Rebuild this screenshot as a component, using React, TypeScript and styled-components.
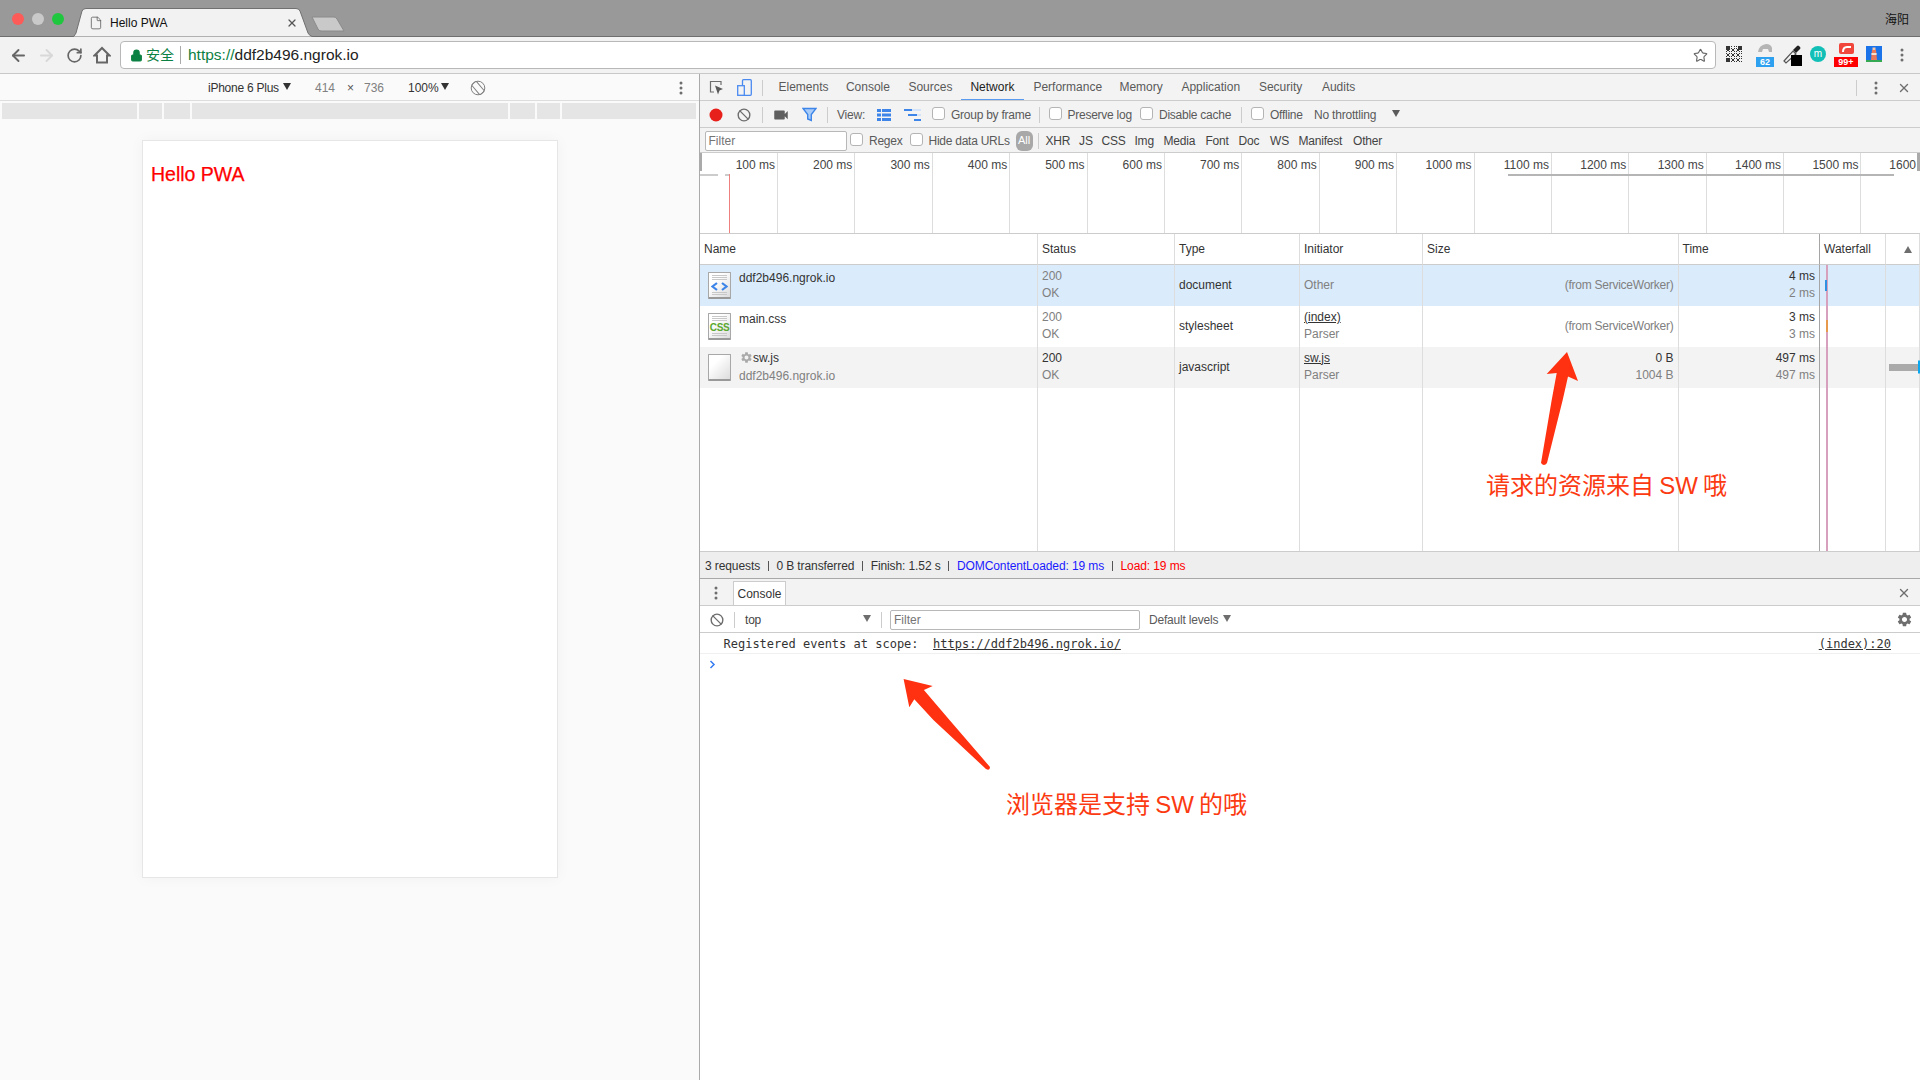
import React from "react";
import styled, { createGlobalStyle } from "styled-components";
import { ArrowLeft, ArrowRight, RotateCw, Star, X, Ban, Lock, File } from "lucide-react";
import { MdSettings, MdVideocam } from "react-icons/md";

const Global = createGlobalStyle`
  html, body { margin: 0; padding: 0; width: 1920px; height: 1080px; overflow: hidden; background: #fff; }
  * { box-sizing: border-box; }
  #root { width: 1920px; height: 1080px; }
`;

const SANS = `"Liberation Sans", "Noto Sans CJK SC", sans-serif`;
const MONO = `"DejaVu Sans Mono", monospace`;

const Page = styled.div`
  position: relative; width: 1920px; height: 1080px; display: flex; flex-direction: column;
  font: 12px/14px ${SANS}; color: #333; overflow: hidden;
`;
const TabStrip = styled.div`
  height: 37px; flex: none; background: #999; border-bottom: 1px solid #6e6e6e;
  display: flex; align-items: flex-start; padding-left: 12px;
`;
const Lights = styled.div`display: flex; gap: 8px; margin-top: 13px; width: 61px;`;
const Light = styled.span<{ $c: string }>`width: 12px; height: 12px; border-radius: 50%; background: ${p => p.$c};`;
const BrowserTab = styled.div`
  position: relative; width: 241px; height: 29px; margin-top: 8px; display: flex; align-items: center;
  padding: 1px 16px 0 16px; gap: 8px; font-size: 12px; color: #111;
`;
const TabShape = styled.svg`position: absolute; left: 0; top: 0; width: 241px; height: 29px;`;
const TabContent = styled.span`position: relative; display: flex; align-items: center;`;
const TabTitle = styled(TabContent)`flex: 1; margin-left: -1px;`;
const NewTab = styled.svg`margin: 16px 0 0 -3px; flex: none;`;
const UserName = styled.div`margin-left: auto; margin-top: 13px; padding-right: 11px; font-size: 12px; color: #111;`;

const NavBar = styled.div`
  height: 37px; flex: none; background: #f2f2f2; border-bottom: 1px solid #c8c8c8;
  display: flex; align-items: center; padding-left: 4px;
`;
const NavSlot = styled.div<{ $c: string }>`width: 28px; display: flex; justify-content: center; color: ${p => p.$c};`;
const Address = styled.div`
  width: 1596px; height: 28px; margin-left: 4px; background: #fff; border: 1px solid #b8b8b8; border-radius: 4px;
  display: flex; align-items: center; padding: 0 7px 0 9px; font-size: 14px;
`;
const Secure = styled.span`color: #0b8043; margin-left: 3px; padding-right: 6px; border-right: 1px solid #aaa; line-height: 18px;`;
const Scheme = styled.span`color: #0b8043; margin-left: 7px; font-size: 15.5px;`;
const Host = styled.span`color: #222; font-size: 15.5px;`;
const StarSlot = styled.span`margin-left: auto; display: flex; color: #666;`;
const Ext = styled.div<{ $w: number }>`
  position: relative; width: ${p => p.$w}px; height: 24px; flex: none; display: flex; justify-content: center; align-items: center;
`;
const Badge = styled.span<{ $bg: string; $w: number }>`
  position: absolute; left: 50%; margin-left: ${p => -p.$w / 2}px; top: 14px; width: ${p => p.$w}px; height: 10px;
  background: ${p => p.$bg}; color: #fff; font: bold 9px/10px ${SANS}; text-align: center;
`;
const MCircle = styled.span`
  width: 16px; height: 16px; margin-top: -3px; border-radius: 50%; background: #12bfb7; color: #fff; font: 10px/15px ${SANS}; text-align: center;
`;

const Main = styled.div`flex: 1; display: flex; min-height: 0;`;
const Emulator = styled.div`width: 700px; flex: none; background: #fafafa; border-right: 1px solid #aaa; display: flex; flex-direction: column;`;
const DeviceBar = styled.div`height: 27px; flex: none; border-bottom: 1px solid #ddd; display: flex; align-items: center; padding: 1px 0 0 208px; color: #333;`;
const DeviceText = styled.span<{ $ml?: number; $c?: string; $w?: number; $tight?: boolean }>`
  margin-left: ${p => p.$ml ?? 0}px; color: ${p => p.$c ?? "#333"}; ${p => (p.$w ? `width: ${p.$w}px;` : "")} flex: none;
  letter-spacing: ${p => (p.$tight ? "-.25px" : "0")};
`;
const Caret = styled.span<{ $ml?: number; $c?: string }>`
  width: 0; height: 0; flex: none; margin-left: ${p => p.$ml ?? 0}px; margin-top: -2px;
  border-left: 4px solid transparent; border-right: 4px solid transparent; border-top: 7px solid ${p => p.$c ?? "#333"};
`;
const Ruler = styled.div`display: flex; gap: 2px; height: 16px; flex: none; margin: 2px 3px 0 2px;`;
const RulerSeg = styled.div<{ $w: number }>`width: ${p => p.$w}px; background: #e5e5e5;`;
const DeviceCard = styled.div`
  width: 416px; height: 738px; flex: none; margin: 21px 0 0 142px; background: #fff; border: 1px solid #e6e6e6;
  box-shadow: 0 0 14px rgba(0,0,0,.04); padding: 21px 0 0 8px;
`;
const Hello = styled.h1`margin: 0; font: 19.5px/24px ${SANS}; color: #f00; -webkit-text-stroke: .25px #f00;`;

const Dev = styled.div`flex: 1; min-width: 0; display: flex; flex-direction: column; background: #fff;`;
const ToolRow = styled.div<{ $h: number; $pl?: number; $bg?: string }>`
  height: ${p => p.$h}px; flex: none; background: ${p => p.$bg ?? "#f3f3f3"}; border-bottom: 1px solid #ccc;
  display: flex; align-items: center; padding: 1px 0 0 ${p => p.$pl ?? 0}px; white-space: nowrap; overflow: hidden;
`;
const IconSlot = styled.div<{ $w: number; $c?: string }>`
  width: ${p => p.$w}px; flex: none; display: flex; justify-content: center; align-items: center; color: ${p => p.$c ?? "#6e6e6e"};
`;
const Sep = styled.div<{ $ml?: number }>`width: 1px; height: 16px; flex: none; background: #ccc; margin-left: ${p => p.$ml ?? 0}px;`;
const DevTab = styled.div<{ $w: number; $on?: boolean }>`
  position: relative; width: ${p => p.$w}px; height: 26px; flex: none; padding-left: 9.5px; line-height: 24px; color: ${p => (p.$on ? "#222" : "#5a5a5a")};
  border-bottom: 2px solid ${p => (p.$on ? "#5a9bf0" : "transparent")};
`;
const RightTools = styled.div`margin-left: auto; display: flex; align-items: center;`;
const Label = styled.span<{ $ml?: number; $w?: number; $c?: string }>`
  flex: none; margin-left: ${p => p.$ml ?? 0}px; ${p => (p.$w ? `width: ${p.$w}px;` : "")} color: ${p => p.$c ?? "#5a5a5a"}; letter-spacing: -.2px;
`;
const CheckLabel = styled.label<{ $ml?: number; $w: number }>`
  flex: none; display: flex; align-items: center; gap: 6px; margin-left: ${p => p.$ml ?? 0}px; width: ${p => p.$w}px; color: #5a5a5a; letter-spacing: -.25px;
`;
const Box = styled.span`width: 13px; height: 13px; margin-top: -3px; flex: none; background: #fff; border: 1px solid #b4b4b4; border-radius: 3px;`;
const FilterBox = styled.div<{ $w: number; $h: number; $ml?: number }>`
  flex: none; width: ${p => p.$w}px; height: ${p => p.$h}px; margin-left: ${p => p.$ml ?? 0}px; background: #fff; border: 1px solid #b8b8b8; border-radius: 2px;
  color: #757575; padding-left: 3px; line-height: ${p => p.$h - 2}px;
`;
const AllPill = styled.span`
  width: 17px; height: 20px; flex: none; margin-left: 0; background: #a8a8a8; border-radius: 6px; color: #fff; text-align: center; line-height: 19px; font-size: 11px;
`;
const Chip = styled.span<{ $w: number }>`flex: none; width: ${p => p.$w}px; color: #444; letter-spacing: -.2px;`;

const Overview = styled.div`
  position: relative; height: 81px; flex: none; border-bottom: 1px solid #ccc; display: flex; overflow: hidden; padding-left: .6px;
`;
const Tick = styled.div`
  width: 77.4px; flex: none; height: 100%; border-right: 1px solid #ddd; text-align: right; padding: 5px 2px 0 0; color: #444; white-space: nowrap;
`;
const LastTick = styled.div`flex: 1; height: 100%; text-align: right; padding: 5px 4px 0 0; color: #444;`;
const OverviewChart = styled.svg`position: absolute; left: 0; top: 0;`;

const Table = styled.div`
  position: relative; height: 317px; flex: none; display: grid;
  grid-template-columns: 338px 137px 125px 123px 255.5px 141.5px 66px 34px;
  grid-template-rows: 31px 41px 41px 41px 1fr;
`;
const HeadCell = styled.div<{ $dark?: boolean }>`
  border-bottom: 1px solid #ccc; border-right: 1px solid ${p => (p.$dark ? "#a5a5a5" : "#ddd")}; padding-left: 4px; line-height: 29px; color: #333;
  display: flex; align-items: center;
`;
const Cell = styled.div<{ $bg?: string; $right?: boolean; $dark?: boolean }>`
  background: ${p => p.$bg ?? "transparent"}; border-right: 1px solid ${p => (p.$dark ? "#a5a5a5" : "#ddd")};
  padding: 2px 4px 0 4px; display: flex; flex-direction: column; line-height: 18px; white-space: nowrap;
  text-align: ${p => (p.$right ? "right" : "left")}; justify-content: flex-start;
`;
const Mid = styled.div<{ $c?: string }>`line-height: 36px; color: ${p => p.$c ?? "#333"};`;
const SizeNote = styled(Mid)`letter-spacing: -.25px;`;
const Line = styled.div<{ $c?: string; $u?: boolean }>`
  color: ${p => p.$c ?? "#333"}; text-decoration: ${p => (p.$u ? "underline" : "none")}; height: 17.6px; display: flex; align-items: center;
  justify-content: inherit;
`;
const RightLine = styled(Line)`justify-content: flex-end;`;
const NameCell = styled.div<{ $bg?: string }>`
  background: ${p => p.$bg ?? "transparent"}; border-right: 1px solid #ddd; padding: 7px 0 0 8px; display: flex; gap: 8px;
`;
const NameText = styled.div`margin-top: -3.5px; line-height: 18px;`;
const NameMain = styled.div`height: 17px; margin-top: -2px; margin-bottom: 1px;`;
const NameSub = styled.div`color: #808080;`;
const Cog = styled(MdSettings)`vertical-align: -2px; margin-left: 1px;`;
const FileIcon = styled.div`
  position: relative; width: 23px; height: 27px; flex: none; border: 1px solid #a8a8a8; border-bottom: 2px solid #999; border-radius: 1px;
  background: linear-gradient(135deg, #fff 30%, #dcdcdc); display: flex; flex-direction: column; align-items: center; justify-content: center; gap: 1px;
`;
const CssMark = styled.span`font: bold 10px/9px ${SANS}; color: #5aa82e; letter-spacing: -.4px;`;
const DocLines = styled.span<{ $n: number }>`
  width: 15px; height: ${p => p.$n * 2}px; flex: none;
  background: repeating-linear-gradient(#c8c8c8 0 1px, transparent 1px 2px);
`;
const WaterfallChart = styled.svg`position: absolute; right: 0; top: 31px; pointer-events: none;`;
const SortUp = styled.span`width: 0; height: 0; margin-left: 14px; border-left: 4px solid transparent; border-right: 4px solid transparent; border-bottom: 7px solid #6e6e6e;`;

const Status = styled.div`
  height: 28px; flex: none; background: #eee; border-top: 1px solid #ccc; border-bottom: 1px solid #a8a8a8;
  display: flex; align-items: center; padding: 1px 0 0 5px; gap: 7.7px; color: #333; letter-spacing: -.1px;
`;
const StatusBar = styled.span`width: 1px; height: 10px; background: #555;`;
const StatusText = styled.span<{ $c?: string }>`color: ${p => p.$c ?? "#333"};`;
const DrawerTab = styled.div`
  width: 53px; height: 24px; margin: 1px 0 0 7px; background: #fff; border: 1px solid #ccc; border-bottom: none; text-align: center; line-height: 24px; color: #333; flex: none; align-self: flex-start;
`;
const Message = styled.div`
  height: 21px; flex: none; border-bottom: 1px solid #f0f0f0; display: flex; align-items: center; padding: 2px 29px 0 23.5px; font: 12px/16px ${MONO}; color: #333; white-space: pre;
`;
const MonoLink = styled.span<{ $right?: boolean }>`text-decoration: underline; ${p => (p.$right ? "margin-left: auto;" : "")}`;
const Prompt = styled.div`padding: 6px 0 0 9px; display: flex;`;

const Annotations = styled.svg`position: absolute; left: 0; top: 0; pointer-events: none;`;
const Note = styled.div<{ $x: number; $y: number; $ws: number }>`
  position: absolute; left: ${p => p.$x}px; top: ${p => p.$y}px; font: 24px/30px ${SANS}; color: #fb3a12; white-space: nowrap; word-spacing: ${p => p.$ws}px;
`;

const Dots = ({ c = "#6e6e6e" }: { c?: string }) => (
  <svg width="4" height="14" viewBox="0 0 4 14"><circle cx="2" cy="2" r="1.5" fill={c} /><circle cx="2" cy="7" r="1.5" fill={c} /><circle cx="2" cy="12" r="1.5" fill={c} /></svg>
);

const QR = () => {
  const cells: React.ReactNode[] = [];
  for (let y = 0; y < 16; y++) for (let x = 0; x < 16; x++) {
    const finder = (x < 4 && y < 4) || (x > 11 && y < 4) || (x < 4 && y > 11);
    const on = finder || ((x * 7 + y * 13 + x * y * 3) % 5) < 2;
    if (on) cells.push(<rect key={x + "-" + y} x={x} y={y} width="1" height="1" fill="#333" />);
  }
  return <svg width="16" height="16" viewBox="0 0 16 16" style={{ marginTop: -2 }}>{cells}</svg>;
};

const ticks = Array.from({ length: 15 }, (_, i) => `${(i + 1) * 100} ms`);

export default function App() {
  return (
    <Page>
      <Global />
      <TabStrip>
        <Lights>
          <Light $c="#fc5b57" /><Light $c="#c9c9c9" /><Light $c="#1fc73e" />
        </Lights>
        <BrowserTab>
          <TabShape viewBox="0 0 241 29">
            <path d="M0 29 L1 28 Q2 27 3 25 L9 3 Q10 0.5 13 0.5 L223 0.5 Q226 0.5 227 3 L235 25 Q236 27 238 28 L241 29 Z" fill="#f2f2f2" stroke="#707070" strokeWidth="1" />
          </TabShape>
          <TabContent><File size={14} color="#555" strokeWidth={1.3} /></TabContent>
          <TabTitle>Hello PWA</TabTitle>
          <TabContent><X size={12} color="#555" strokeWidth={2.5} /></TabContent>
        </BrowserTab>
        <NewTab width="34" height="17" viewBox="0 0 34 17">
          <path d="M1 1 L23 1 Q25 1 26 3 L33 15 L10 15 Q8 15 7 13 Z" fill="#c9c9c9" stroke="#8a8a8a" strokeWidth="1" />
        </NewTab>
        <UserName>海阳</UserName>
      </TabStrip>
      <NavBar>
        <NavSlot $c="#666"><ArrowLeft size={19} strokeWidth={2.4} /></NavSlot>
        <NavSlot $c="#d8d8d8"><ArrowRight size={19} strokeWidth={2.4} /></NavSlot>
        <NavSlot $c="#666"><RotateCw size={17} strokeWidth={2.4} /></NavSlot>
        <NavSlot $c="#666">
          <svg width="18" height="18" viewBox="0 0 18 18" fill="none" stroke="#666" strokeWidth="2"><path d="M1.5 9.5 L9 2 L16.5 9.5 H14 V16.5 H4 V9.5 Z" /></svg>
        </NavSlot>
        <Address>
          <Lock size={13} color="#0b8043" fill="#0b8043" strokeWidth={2} />
          <Secure>安全</Secure>
          <Scheme>https://</Scheme>
          <Host>ddf2b496.ngrok.io</Host>
          <StarSlot><Star size={15} strokeWidth={1.8} /></StarSlot>
        </Address>
        <Ext $w={36}><QR /></Ext>
        <Ext $w={26}>
          <svg width="18" height="10" viewBox="0 0 18 10" style={{ marginTop: -14 }}><path d="M2 9 Q3 2 10 1 Q15 1 16 5 L16 9 L13 9 L12 6 L7 6 L6 9 Z" fill="#b5b5b5" /></svg>
          <Badge $bg="#2ea0f0" $w={18}>62</Badge>
        </Ext>
        <Ext $w={30}>
          <svg width="20" height="21" viewBox="0 0 20 21">
            <path d="M1 16 L10 6 L13 9 L3 18 Z" fill="none" stroke="#555" strokeWidth="1.2" />
            <path d="M10 5 L14 1 Q15 0 16 1 L17 2 Q18 3 17 4 L13 8 Z" fill="#222" />
            <rect x="8" y="10" width="11" height="11" fill="#000" />
          </svg>
        </Ext>
        <Ext $w={20}><MCircle>m</MCircle></Ext>
        <Ext $w={36}>
          <svg width="15" height="11" viewBox="0 0 15 11" style={{ marginTop: -13 }}><rect width="15" height="11" rx="2" fill="#f0463c" /><path d="M4 9 Q4 4 8 4 L12 4" fill="none" stroke="#fff" strokeWidth="2" /></svg>
          <Badge $bg="#f00" $w={24}>99+</Badge>
        </Ext>
        <Ext $w={20}>
          <svg width="16" height="16" viewBox="0 0 16 16" style={{ marginTop: -2 }}>
            <rect width="16" height="16" fill="#1a73e8" />
            <rect y="14" width="16" height="2" fill="#34a853" />
            <path d="M6 4 L10 4 L11 14 L5 14 Z" fill="#ec7a5a" />
            <rect x="6.5" y="1.5" width="3" height="2.5" fill="#f7c6a8" />
            <rect x="5.4" y="7" width="5.2" height="2" fill="#f2e0d0" />
          </svg>
        </Ext>
        <Ext $w={36}><Dots /></Ext>
      </NavBar>
      <Main>
        <Emulator>
          <DeviceBar>
            <DeviceText $w={75} $tight>iPhone 6 Plus</DeviceText>
            <Caret />
            <DeviceText $ml={24} $c="#808080" $w={32}>414</DeviceText>
            <DeviceText $c="#555" $w={17}>×</DeviceText>
            <DeviceText $c="#808080" $w={44}>736</DeviceText>
            <DeviceText $w={33}>100%</DeviceText>
            <Caret />
            <IconSlot $w={58} $c="#808080">
              <svg width="16" height="16" viewBox="0 0 16 16" fill="none" stroke="#808080"><circle cx="8" cy="8" r="6.8" /><rect x="5" y="1.5" width="6" height="13" rx="1" transform="rotate(-40 8 8)" /></svg>
            </IconSlot>
            <IconSlot $w={347}><Dots /></IconSlot>
          </DeviceBar>
          <Ruler>
            {[135, 23, 26, 316, 25, 23, 134].map((w, i) => <RulerSeg key={i} $w={w} />)}
          </Ruler>
          <DeviceCard><Hello>Hello PWA</Hello></DeviceCard>
        </Emulator>
        <Dev>
          <ToolRow $h={27}>
            <IconSlot $w={32}>
              <svg width="15" height="16" viewBox="0 0 15 16" fill="none"><path d="M12 5 V1.5 H1.5 V12 H5" stroke="#6e6e6e" strokeWidth="1.2" /><path d="M6 5.5 L14 9 L10.5 10.5 L9 14.5 Z" fill="#5a5a5a" /></svg>
            </IconSlot>
            <IconSlot $w={24}>
              <svg width="15" height="17" viewBox="0 0 15 17" fill="none"><rect x="5.5" y="0.7" width="8.8" height="15.6" rx="1" stroke="#4a8af0" strokeWidth="1.3" /><rect x="0.7" y="6.7" width="6.6" height="9.6" fill="#f3f3f3" stroke="#4a8af0" strokeWidth="1.3" /></svg>
            </IconSlot>
            <Sep $ml={6} />
            <Label $w={6} />
            {[["Elements", 67.4], ["Console", 62.5], ["Sources", 62], ["Network", 63], ["Performance", 86], ["Memory", 62], ["Application", 77.5], ["Security", 63], ["Audits", 60]].map(([t, w]) => (
              <DevTab key={t as string} $w={w as number} $on={t === "Network"}>{t}</DevTab>
            ))}
            <RightTools>
              <Sep />
              <IconSlot $w={38}><Dots /></IconSlot>
              <IconSlot $w={18}><X size={14} strokeWidth={2.4} /></IconSlot>
              <IconSlot $w={7} />
            </RightTools>
          </ToolRow>
          <ToolRow $h={27} $pl={5}>
            <IconSlot $w={22}><svg width="14" height="14" viewBox="0 0 14 14"><circle cx="7" cy="7" r="6.5" fill="#e8201c" /></svg></IconSlot>
            <IconSlot $w={34}><Ban size={14} strokeWidth={2.4} /></IconSlot>
            <Sep $ml={1} />
            <IconSlot $w={36}><MdVideocam size={18} color="#5f5f5f" /></IconSlot>
            <IconSlot $w={20}>
              <svg width="15" height="15" viewBox="0 0 15 15"><path d="M1 1.5 H14 L9.3 7.5 V13.5 L5.7 12 V7.5 Z" fill="#a9cdf8" stroke="#3d85e8" strokeWidth="1.4" /></svg>
            </IconSlot>
            <Sep $ml={8} />
            <Label $ml={9} $w={28}>View:</Label>
            <IconSlot $w={38}>
              <svg width="14" height="12" viewBox="0 0 14 12" fill="#3d85e8"><rect width="4" height="3" /><rect x="5" width="9" height="3" /><rect y="4.5" width="4" height="3" /><rect x="5" y="4.5" width="9" height="3" /><rect y="9" width="4" height="3" /><rect x="5" y="9" width="9" height="3" /></svg>
            </IconSlot>
            <IconSlot $w={19}>
              <svg width="17" height="12" viewBox="0 0 17 12"><rect width="8" height="2" fill="#3d85e8" /><rect x="8" width="9" height="2" fill="#d2e3fa" /><rect x="4" y="5" width="9" height="2" fill="#3d85e8" /><rect x="13" y="5" width="4" height="2" fill="#d2e3fa" /><rect x="10" y="10" width="7" height="2" fill="#3d85e8" /></svg>
            </IconSlot>
            <CheckLabel $ml={10} $w={107}><Box />Group by frame</CheckLabel>
            <Sep />
            <CheckLabel $ml={8.5} $w={91.5}><Box />Preserve log</CheckLabel>
            <CheckLabel $ml={0} $w={101}><Box />Disable cache</CheckLabel>
            <Sep />
            <CheckLabel $ml={9} $w={63}><Box />Offline</CheckLabel>
            <Label $w={78}>No throttling</Label>
            <Caret $c="#5a5a5a" />
          </ToolRow>
          <ToolRow $h={25} $pl={4.5}>
            <FilterBox $w={142} $h={20}>Filter</FilterBox>
            <CheckLabel $ml={3.5} $w={59.5}><Box />Regex</CheckLabel>
            <CheckLabel $w={106}><Box />Hide data URLs</CheckLabel>
            <AllPill>All</AllPill>
            <Sep $ml={5} />
            <Label $w={7} />
            {[["XHR", 33.6], ["JS", 22.4], ["CSS", 33], ["Img", 29], ["Media", 42], ["Font", 33], ["Doc", 31.6], ["WS", 28.4], ["Manifest", 54.6], ["Other", 40]].map(([t, w]) => (
              <Chip key={t as string} $w={w as number}>{t}</Chip>
            ))}
          </ToolRow>
          <Overview>
            {ticks.map(t => <Tick key={t}>{t}</Tick>)}
            <LastTick>1600</LastTick>
            <OverviewChart width="1220" height="80" viewBox="0 0 1220 80">
              <rect x="0" y="0" width="2" height="18" fill="#aaa" />
              <rect x="1217" y="0" width="3" height="18" fill="#aaa" />
              <rect x="0" y="21" width="18" height="2" fill="#ccc" />
              <rect x="25" y="21" width="4" height="2" fill="#ccc" />
              <rect x="29" y="21" width="1" height="59" fill="#f08080" />
              <rect x="808" y="21" width="386" height="2" fill="#b5b5b5" />
            </OverviewChart>
          </Overview>
          <Table>
            <HeadCell>Name</HeadCell>
            <HeadCell>Status</HeadCell>
            <HeadCell>Type</HeadCell>
            <HeadCell>Initiator</HeadCell>
            <HeadCell>Size</HeadCell>
            <HeadCell $dark>Time</HeadCell>
            <HeadCell>Waterfall</HeadCell>
            <HeadCell><SortUp /></HeadCell>

            <NameCell $bg="#daebfc">
              <FileIcon>
                <DocLines $n={3} />
                <svg width="17" height="9" viewBox="0 0 17 9" fill="none" stroke="#3d85e8" strokeWidth="2.2"><path d="M6 1 L1.5 4.5 L6 8" /><path d="M11 1 L15.5 4.5 L11 8" /></svg>
                <DocLines $n={2} />
              </FileIcon>
              <NameText>ddf2b496.ngrok.io</NameText>
            </NameCell>
            <Cell $bg="#daebfc"><Line $c="#808080">200</Line><Line $c="#808080">OK</Line></Cell>
            <Cell $bg="#daebfc"><Mid>document</Mid></Cell>
            <Cell $bg="#daebfc"><Mid $c="#808080">Other</Mid></Cell>
            <Cell $bg="#daebfc" $right><SizeNote $c="#808080">(from ServiceWorker)</SizeNote></Cell>
            <Cell $bg="#daebfc" $right $dark><RightLine>4 ms</RightLine><RightLine $c="#808080">2 ms</RightLine></Cell>
            <Cell $bg="#daebfc" />
            <Cell $bg="#daebfc" />

            <NameCell>
              <FileIcon>
                <DocLines $n={3} />
                <CssMark>CSS</CssMark>
                <DocLines $n={2} />
              </FileIcon>
              <NameText>main.css</NameText>
            </NameCell>
            <Cell><Line $c="#808080">200</Line><Line $c="#808080">OK</Line></Cell>
            <Cell><Mid>stylesheet</Mid></Cell>
            <Cell><Line $u>(index)</Line><Line $c="#808080">Parser</Line></Cell>
            <Cell $right><SizeNote $c="#808080">(from ServiceWorker)</SizeNote></Cell>
            <Cell $right $dark><RightLine>3 ms</RightLine><RightLine $c="#808080">3 ms</RightLine></Cell>
            <Cell />
            <Cell />

            <NameCell $bg="#f3f3f3">
              <FileIcon />
              <NameText>
                <NameMain><Cog size={13} color="#aaa" />sw.js</NameMain>
                <NameSub>ddf2b496.ngrok.io</NameSub>
              </NameText>
            </NameCell>
            <Cell $bg="#f3f3f3"><Line>200</Line><Line $c="#808080">OK</Line></Cell>
            <Cell $bg="#f3f3f3"><Mid>javascript</Mid></Cell>
            <Cell $bg="#f3f3f3"><Line $u>sw.js</Line><Line $c="#808080">Parser</Line></Cell>
            <Cell $bg="#f3f3f3" $right><RightLine>0 B</RightLine><RightLine $c="#808080">1004 B</RightLine></Cell>
            <Cell $bg="#f3f3f3" $right $dark><RightLine>497 ms</RightLine><RightLine $c="#808080">497 ms</RightLine></Cell>
            <Cell $bg="#f3f3f3" />
            <Cell $bg="#f3f3f3" />

            <Cell /><Cell /><Cell /><Cell /><Cell /><Cell $dark /><Cell /><Cell />

            <WaterfallChart width="100" height="286" viewBox="0 0 100 286">
              <rect x="6" y="0" width="2" height="286" fill="#d7a0bd" />
              <rect x="5" y="15" width="2" height="11" fill="#2f8fe0" />
              <rect x="6" y="55" width="2" height="12" fill="#e89a4c" />
              <rect x="69" y="99" width="29" height="7" fill="#aaa" />
              <rect x="98" y="95.5" width="2" height="13" fill="#0aa8f0" />
            </WaterfallChart>
          </Table>
          <Status>
            <StatusText>3 requests</StatusText><StatusBar />
            <StatusText>0 B transferred</StatusText><StatusBar />
            <StatusText>Finish: 1.52 s</StatusText><StatusBar />
            <StatusText $c="#1a1aff">DOMContentLoaded: 19 ms</StatusText><StatusBar />
            <StatusText $c="#f00">Load: 19 ms</StatusText>
          </Status>
          <ToolRow $h={27} $pl={14}>
            <IconSlot $w={4}><Dots /></IconSlot>
            <IconSlot $w={8} />
            <DrawerTab>Console</DrawerTab>
            <RightTools>
              <IconSlot $w={18}><X size={14} strokeWidth={2.4} /></IconSlot>
              <IconSlot $w={7} />
            </RightTools>
          </ToolRow>
          <ToolRow $h={27} $pl={7} $bg="#fff">
            <IconSlot $w={19}><Ban size={14} strokeWidth={2.4} /></IconSlot>
            <Sep $ml={8} />
            <Label $ml={10} $w={118} $c="#444">top</Label>
            <Caret $c="#6e6e6e" />
            <Sep $ml={10} />
            <FilterBox $w={250} $h={20} $ml={8}>Filter</FilterBox>
            <Label $ml={9} $w={74} $c="#5a5a5a">Default levels</Label>
            <Caret $c="#6e6e6e" />
            <RightTools>
              <IconSlot $w={18}><MdSettings size={17} /></IconSlot>
              <IconSlot $w={7} />
            </RightTools>
          </ToolRow>
          <Message>
            Registered events at scope:  <MonoLink>https://ddf2b496.ngrok.io/</MonoLink>
            <MonoLink $right>(index):20</MonoLink>
          </Message>
          <Prompt>
            <svg width="7" height="9" viewBox="0 0 7 9" fill="none" stroke="#367cf1" strokeWidth="1.5"><path d="M1.5 1 L5 4.5 L1.5 8" /></svg>
          </Prompt>
        </Dev>
      </Main>
      <Annotations width="1920" height="1080" viewBox="0 0 1920 1080">
        <path d="M1567 352 L1578 381 L1568 376.5 L1562.7 400 L1547 463 Q1544 467 1541 463 L1551.7 400 L1556.7 373 L1546.7 374 Z" fill="#ff3110" />
        <path d="M903.6 679 L932.7 686 L923.9 690 L949.5 720 L990 767 Q990 771 986 769 L933.4 720 L914.3 699.3 L909.3 707.3 Z" fill="#ff3110" />
      </Annotations>
      <Note $x={1486} $y={471} $ws={-1.5}>请求的资源来自 SW 哦</Note>
      <Note $x={1006} $y={790} $ws={-1.5}>浏览器是支持 SW 的哦</Note>
    </Page>
  );
}
